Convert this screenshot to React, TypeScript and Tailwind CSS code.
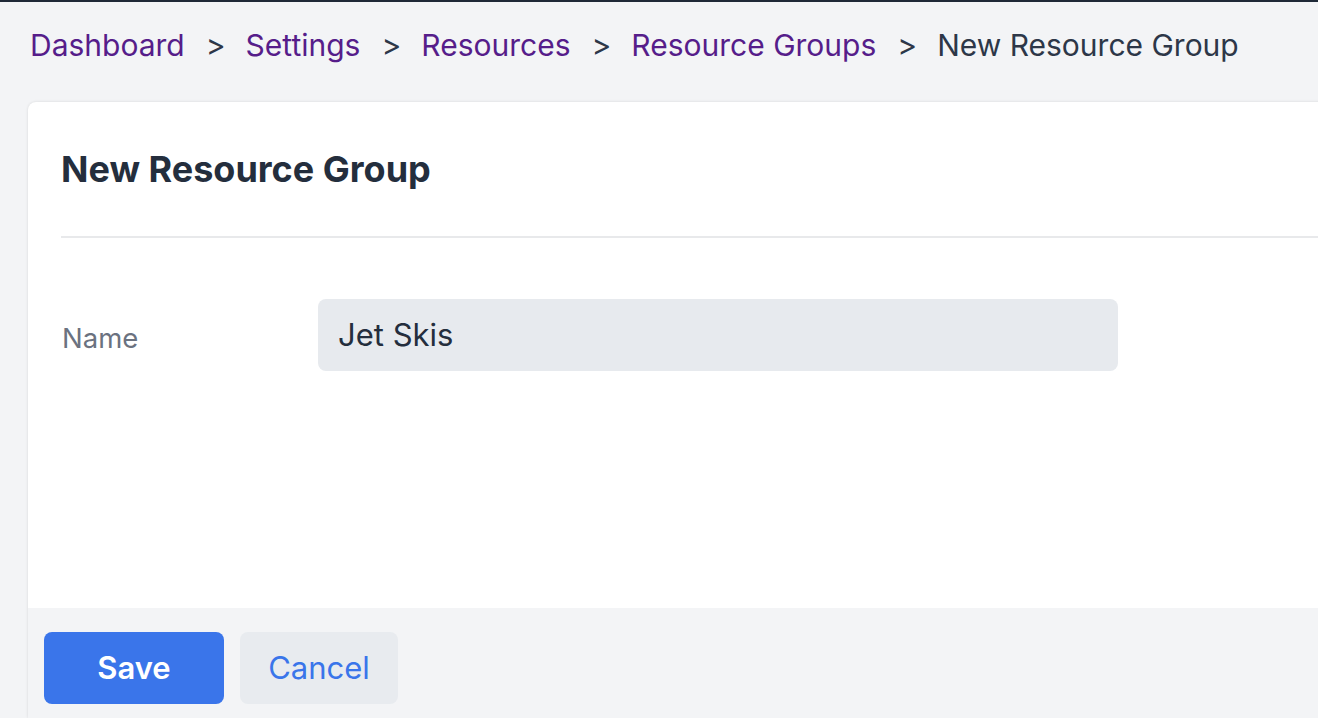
import React from "react";

export default function App() {
  const crumbs = ["Dashboard", "Settings", "Resources", "Resource Groups"];
  return (
    <div
      className="h-[718px] w-full overflow-hidden bg-[#f3f4f6] border-t-2 border-[#1f2937] flex flex-col"
      style={{ fontFamily: "Inter, 'Noto Sans', sans-serif" }}
    >
      <nav className="flex items-center pl-[30px] h-[88px] text-[30px] leading-none pb-[2px]">
        {crumbs.map((c) => (
          <React.Fragment key={c}>
            <span className="text-[#561d8a]">{c}</span>
            <span className="text-[#2d3748] ml-[21px] mr-[20px]">&gt;</span>
          </React.Fragment>
        ))}
        <span className="text-[#2d3748]">New Resource Group</span>
      </nav>
      <div className="ml-[28px] mr-[-40px] mt-[12px] flex-1 bg-white rounded-tl-[8px] shadow-[0_0_3px_rgba(0,0,0,0.12)] flex flex-col">
        <div className="pl-[33px] pt-[46px] pb-[46px]">
          <h1 className="text-[36px] leading-[42px] font-bold text-[#242e3d]">New Resource Group</h1>
        </div>
        <div className="ml-[33px] h-[2px] bg-[#e8e9eb]"></div>
        <div className="flex pl-[34px] pt-[61px] h-[370px] items-start">
          <label className="w-[256px] text-[27.5px] text-[#6b7280] mt-[19px]">Name</label>
          <div className="w-[800px] h-[72px] rounded-[8px] bg-[#e7eaee] flex items-center pl-[20px] text-[31px] text-[#242e3d]">
            Jet Skis
          </div>
        </div>
        <div className="flex-1 bg-[#f3f4f6] flex items-start gap-[16px] pl-[16px] pt-[24px]">
          <button className="w-[180px] h-[72px] rounded-[8px] bg-[#3a75ea] text-white text-[31px] font-semibold">
            Save
          </button>
          <button className="w-[158px] h-[72px] rounded-[8px] bg-[#e8ebef] text-[#3a75ea] text-[31px]">
            Cancel
          </button>
        </div>
      </div>
    </div>
  );
}
